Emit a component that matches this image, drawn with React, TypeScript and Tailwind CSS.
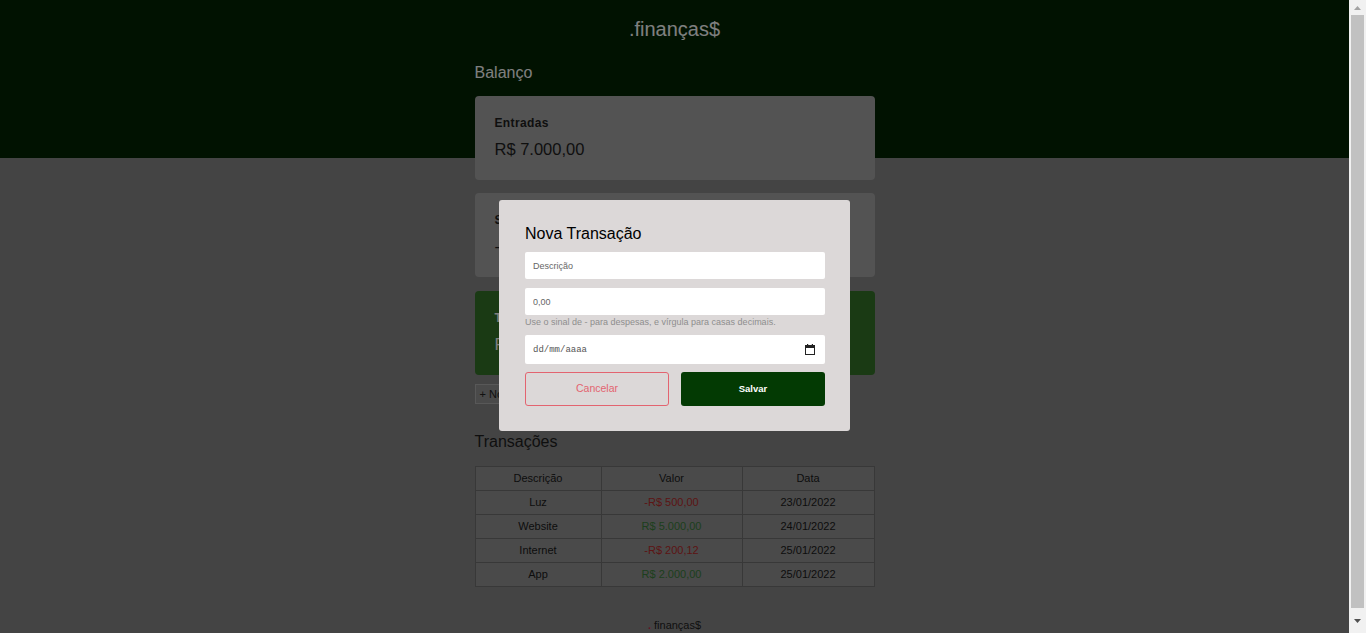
import React from 'react';

const font = { fontFamily: '"Liberation Sans", Arial, sans-serif' };

interface Transaction {
  description: string;
  amount: string;
  expense: boolean;
  date: string;
}

const transactions: Transaction[] = [
  { description: 'Luz', amount: '-R$ 500,00', expense: true, date: '23/01/2022' },
  { description: 'Website', amount: 'R$ 5.000,00', expense: false, date: '24/01/2022' },
  { description: 'Internet', amount: '-R$ 200,12', expense: true, date: '25/01/2022' },
  { description: 'App', amount: 'R$ 2.000,00', expense: false, date: '25/01/2022' },
];

function BalanceCard({ label, value, total, className }: { label: string; value: string; total?: boolean; className: string }) {
  return (
    <div
      className={`h-[84px] rounded-[4px] px-[20px] pt-[19px] ${
        total ? 'bg-[#347428] text-white' : 'bg-[#a6a6a6] text-[#1e1e1e]'
      } ${className}`}
    >
      <h3 className="text-[12px] leading-[16px] font-bold tracking-[0.03em]">{label}</h3>
      <p className="mt-[7px] text-[16.5px] leading-[22px]">{value}</p>
    </div>
  );
}

function CalendarIcon() {
  return (
    <svg width="10" height="11" viewBox="0 0 10 11" className="text-[#222]">
      <rect x="2" y="0" width="1.2" height="2" fill="currentColor" />
      <rect x="6.8" y="0" width="1.2" height="2" fill="currentColor" />
      <rect x="0.5" y="1.5" width="9" height="9" fill="none" stroke="currentColor" strokeWidth="1" />
      <rect x="0.5" y="1.5" width="9" height="2.5" fill="currentColor" />
    </svg>
  );
}

function Scrollbar() {
  return (
    <div className="fixed top-0 right-0 bottom-0 w-[17px] bg-[#f1f1f1] flex flex-col items-center">
      <div className="h-[15px] flex items-center justify-center">
        <svg width="7" height="4" viewBox="0 0 7 4">
          <path d="M3.5 0L7 4H0z" fill="#a3a3a3" />
        </svg>
      </div>
      <div className="w-[13px] h-[593px] bg-[#c1c1c1]" />
      <div className="flex-1 flex items-center justify-center">
        <svg width="7" height="4" viewBox="0 0 7 4">
          <path d="M0 0h7L3.5 4z" fill="#505050" />
        </svg>
      </div>
    </div>
  );
}

function TransactionModal() {
  return (
    <div className="fixed top-0 left-0 bottom-0 right-[17px] bg-black/50 flex items-center justify-center">
      <div className="w-[351px] mb-[2px] bg-[#dcd8d8] rounded-[3px] pl-[26px] pr-[25px] pt-[24px] pb-[25px]">
        <h2 className="text-[16px] leading-[20px] text-black">Nova Transação</h2>
        <form className="mt-[8px]">
          <input
            type="text"
            placeholder="Descrição"
            className="block w-full h-[27px] bg-white rounded-[2px] px-[8px] text-[9px] text-[#333] placeholder:text-[#666] outline-none"
          />
          <input
            type="text"
            placeholder="0,00"
            className="block w-full h-[27px] mt-[9px] bg-white rounded-[2px] px-[8px] text-[9px] text-[#333] placeholder:text-[#666] outline-none"
          />
          <small className="block mt-[1px] text-[9px] leading-[12px] text-[#8e8e8e]">
            Use o sinal de - para despesas, e vírgula para casas decimais.
          </small>
          <div className="mt-[7px] h-[29px] bg-white rounded-[2px] pl-[8px] pr-[10px] flex items-center justify-between">
            <span className="mt-[3px] text-[9px] text-[#555]" style={{ fontFamily: '"Liberation Mono", monospace' }}>
              dd/mm/aaaa
            </span>
            <CalendarIcon />
          </div>
          <div className="mt-[8px] grid grid-cols-2 gap-[12px]">
            <button
              type="button"
              className="h-[34px] rounded-[3px] border border-[#e36470] text-[#e36470] text-[10.5px]"
            >
              Cancelar
            </button>
            <button type="button" className="h-[34px] rounded-[3px] bg-[#033a03] text-white text-[9.5px] font-bold">
              Salvar
            </button>
          </div>
        </form>
      </div>
    </div>
  );
}

export default function App() {
  return (
    <div className="min-h-[633px] bg-[#888888] mr-[17px]" style={font}>
      <header className="h-[158px] bg-[#022402] pt-[17px] text-center">
        <h1 className="text-[20px] leading-[24px] text-white">.finanças$</h1>
      </header>

      <main className="w-[400px] mx-auto -mt-[95px]">
        <section>
          <h2 className="text-[16px] leading-[20px] text-white mb-[13px]">Balanço</h2>
          <BalanceCard label="Entradas" value="R$ 7.000,00" className="mb-[13px]" />
          <BalanceCard label="Saídas" value="-R$ 700,12" className="mb-[14px]" />
          <BalanceCard label="Total" value="R$ 6.299,88" total className="" />
        </section>

        <button
          type="button"
          className="mt-[9px] h-[20px] px-[4px] bg-[#949494] border border-[#b0b0b0] text-[11px] text-[#222]"
        >
          + Nova Transação
        </button>

        <section className="mt-[27px]">
          <h2 className="text-[16px] leading-[20px] text-[#1e1e1e]">Transações</h2>
          <table className="mt-[14px] w-[399px] border-collapse text-[11px] text-[#1a1a1a] table-fixed">
            <colgroup>
              <col className="w-[126px]" />
              <col className="w-[141px]" />
              <col className="w-[132px]" />
            </colgroup>
            <thead>
              <tr className="h-[24px] bg-[#949494]">
                <th className="font-normal border border-[#707070]">Descrição</th>
                <th className="font-normal border border-[#707070]">Valor</th>
                <th className="font-normal border border-[#707070]">Data</th>
              </tr>
            </thead>
            <tbody>
              {transactions.map((t) => (
                <tr key={t.description} className="h-[24px] bg-[#949494]">
                  <td className="text-center border border-[#707070]">{t.description}</td>
                  <td className={`text-center border border-[#707070] ${t.expense ? 'text-[#b82a2a]' : 'text-[#3a7e3a]'}`}>
                    {t.amount}
                  </td>
                  <td className="text-center border border-[#707070]">{t.date}</td>
                </tr>
              ))}
            </tbody>
          </table>
        </section>
      </main>

      <footer className="mt-[30px] pb-[8px] text-center text-[11px] leading-[16px] text-[#1e1e1e]">
        <span className="text-[#c8284a] font-bold">.</span> finanças$
      </footer>

      <TransactionModal />
      <Scrollbar />
    </div>
  );
}
